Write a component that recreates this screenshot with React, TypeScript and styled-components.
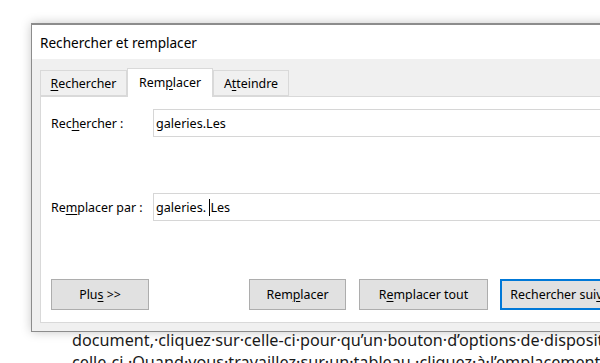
import React from "react";
import styled, { createGlobalStyle } from "styled-components";

const Global = createGlobalStyle`
  html, body { margin: 0; padding: 0; background: #ffffff; }
  body { width: 600px; height: 363px; overflow: hidden; font-family: "Noto Sans", "Open Sans", sans-serif; }
  #root { width: 600px; height: 363px; }
`;

const Page = styled.div`
  position: relative;
  width: 600px;
  height: 363px;
  overflow: hidden;
  background: #ffffff;
`;

const Doc = styled.div`
  padding: 329px 0 0 72px;
  font-family: "Noto Sans", "Open Sans", sans-serif;
  font-size: 16.2px;
  line-height: 22px;
  color: #1a1a1a;
  white-space: nowrap;
`;

const DocLine = styled.div``;

const Dialog = styled.div`
  position: absolute;
  left: 31px;
  top: 23px;
  width: 640px;
  height: 306px;
  background: #f0f0f0;
  border: 1px solid #8c8c8c;
  border-top: 2px solid #8c8c8c;
  box-shadow: 0 0 10px rgba(0, 0, 0, 0.22);
  display: flex;
  flex-direction: column;
  font-family: "Noto Sans", "Open Sans", sans-serif;
  color: #000;
`;

const TitleBar = styled.div`
  height: 34px;
  background: #ffffff;
  display: flex;
  align-items: center;
  padding-left: 8px;
  font-size: 13.6px;
`;

const Body = styled.div`
  flex: 1;
  display: flex;
  flex-direction: column;
  padding: 9px 0 8px 8px;
`;

const TabStrip = styled.div`
  display: flex;
  align-items: flex-end;
  height: 28px;
  position: relative;
  z-index: 1;
`;

const Tab = styled.div<{ $active?: boolean; $w: number }>`
  width: ${(p) => p.$w}px;
  box-sizing: border-box;
  height: ${(p) => (p.$active ? 29 : 26)}px;
  margin-bottom: ${(p) => (p.$active ? -1 : 0)}px;
  background: ${(p) => (p.$active ? "#ffffff" : "#f0f0f0")};
  border: 1px solid #d9d9d9;
  border-bottom: ${(p) => (p.$active ? "none" : "1px solid #d9d9d9")};
  display: flex;
  align-items: center;
  justify-content: center;
  font-size: 12.4px;
  padding-bottom: ${(p) => (p.$active ? 2 : 0)}px;
`;

const Panel = styled.div`
  flex: 1;
  background: #ffffff;
  border: 1px solid #d9d9d9;
  display: flex;
  flex-direction: column;
  padding: 12px 0 12px 10px;
`;

const FieldRow = styled.div<{ $mt?: number }>`
  display: flex;
  align-items: center;
  height: 28px;
  margin-top: ${(p) => p.$mt ?? 0}px;
`;

const Label = styled.div`
  width: 102px;
  font-size: 12.4px;
`;

const Input = styled.div`
  flex: 1;
  height: 28px;
  box-sizing: border-box;
  border: 1px solid #d6d6d6;
  display: flex;
  align-items: center;
  padding-left: 2px;
  font-size: 12.6px;
  white-space: pre;
`;

const Caret = styled.span`
  display: inline-block;
  width: 1px;
  height: 17px;
  background: #000;
  vertical-align: middle;
`;

const ButtonRow = styled.div`
  margin-top: auto;
  display: flex;
  align-items: center;
`;

const Button = styled.div<{ $w: number; $ml?: number; $default?: boolean }>`
  width: ${(p) => p.$w}px;
  height: 31px;
  margin-left: ${(p) => p.$ml ?? 0}px;
  box-sizing: border-box;
  background: #e1e1e1;
  border: 1px solid ${(p) => (p.$default ? "#0078d7" : "#adadad")};
  box-shadow: ${(p) => (p.$default ? "inset 0 0 0 1px #0078d7" : "none")};
  display: flex;
  align-items: center;
  justify-content: center;
  font-size: 12.4px;
  white-space: nowrap;
`;

const U = styled.span`
  text-decoration: underline;
  text-underline-offset: 2px;
`;

export default function App() {
  return (
    <Page>
      <Global />
      <Doc>
        <DocLine>document,·cliquez·sur·celle-ci·pour·qu’un·bouton·d’options·de·disposition</DocLine>
        <DocLine>celle-ci.·Quand·vous·travaillez·sur·un·tableau,·cliquez·à·l’emplacement·où</DocLine>
      </Doc>
      <Dialog>
        <TitleBar>Rechercher et remplacer</TitleBar>
        <Body>
          <TabStrip>
            <Tab $w={87}>
              <span><U>R</U>echercher</span>
            </Tab>
            <Tab $w={86} $active>
              <span>Rem<U>p</U>lacer</span>
            </Tab>
            <Tab $w={76}>
              <span>A<U>t</U>teindre</span>
            </Tab>
          </TabStrip>
          <Panel>
            <FieldRow>
              <Label>Rec<U>h</U>ercher :</Label>
              <Input>galeries.Les</Input>
            </FieldRow>
            <FieldRow $mt={56}>
              <Label>Re<U>m</U>placer par :</Label>
              <Input>
                galeries. <Caret />Les
              </Input>
            </FieldRow>
            <ButtonRow>
              <Button $w={98}>
                <span>Plu<U>s</U> &gt;&gt;</span>
              </Button>
              <Button $w={97} $ml={100}>
                <span>Rem<U>p</U>lacer</span>
              </Button>
              <Button $w={129} $ml={13}>
                <span>R<U>e</U>mplacer tout</span>
              </Button>
              <Button $w={132} $ml={12} $default>
                <span>Rechercher sui<U>v</U>ant</span>
              </Button>
            </ButtonRow>
          </Panel>
        </Body>
      </Dialog>
    </Page>
  );
}
